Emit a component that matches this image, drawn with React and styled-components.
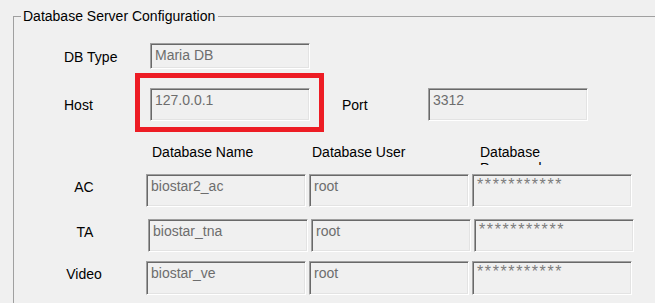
import React from 'react';
import styled, { createGlobalStyle } from 'styled-components';

const GlobalStyle = createGlobalStyle`
    html, body {
        margin: 0;
        padding: 0;
        background: #f0f0f0;
        overflow: hidden;
    }
`;

const Page = styled.div`
    width: 720px;
    padding: 8px 0 0 13px;
    font-family: "Liberation Sans", Arial, sans-serif;
    font-size: 14px;
    line-height: 16px;
    color: #000;
`;

const GroupBox = styled.fieldset`
    margin: 0;
    padding: 0 0 40px 0;
    width: 700px;
    border: 1px solid #a0a0a0;
`;

const Legend = styled.legend`
    margin-left: 7px;
    padding: 0 3px 0 2px;
    font-size: 14px;
    line-height: 16px;
`;

const Body = styled.div`
    padding-top: 19px;
`;

const TopGrid = styled.div`
    display: grid;
    grid-template-columns: 86px 160px 32px 86px 160px;
    grid-template-rows: 26px 33px;
    row-gap: 19px;
    margin-left: 50px;
`;

const Label = styled.div`
    align-self: center;
    padding-top: 1px;
    grid-column: ${(p) => p.$col || 'auto'};
`;

const Field = styled.div`
    box-sizing: border-box;
    height: 100%;
    padding: 3px 4px;
    border: 1px solid;
    border-color: #a0a0a0 #ffffff #ffffff #a0a0a0;
    box-shadow: inset 1px 1px #696969, inset -1px -1px #e3e3e3;
    color: #6d6d6d;
    white-space: nowrap;
    overflow: hidden;
`;

const SecretField = styled(Field)`
    padding-top: 2px;
    font-size: 16px;
    letter-spacing: 1.6px;
    color: #7c7c7c;
`;

const Marked = styled.div`
    position: relative;
`;

const Highlight = styled.div`
    position: absolute;
    top: -15px;
    left: -15px;
    right: -14px;
    bottom: -11px;
    border: 5px solid #ed1c24;
    pointer-events: none;
`;

const TableRow = styled.div`
    display: grid;
    grid-template-columns: ${(p) => 93 + (p.$shift || 0)}px repeat(3, 160px);
    column-gap: 3px;
    height: ${(p) => p.$height || 33}px;
    margin-top: ${(p) => p.$gap}px;
    margin-left: 36px;
`;

const Header = styled.div`
    height: 21px;
    overflow: hidden;
    padding-left: ${(p) => p.$indent}px;
    width: ${(p) => p.$wrap || 'auto'};
`;

const RowLabel = styled.div`
    padding: 5px 25px 0 0;
    text-align: center;
`;

const rows = [
    { label: 'AC', name: 'biostar2_ac', user: 'root', gap: 9, height: 33 },
    { label: 'TA', name: 'biostar_tna', user: 'root', gap: 12, height: 33, shift: 2 },
    { label: 'Video', name: 'biostar_ve', user: 'root', gap: 9, height: 34, shift: 0 },
];

export default function App() {
    return (
        <Page>
            <GlobalStyle />
            <GroupBox>
                <Legend>Database Server Configuration</Legend>
                <Body>
                    <TopGrid>
                        <Label>DB Type</Label>
                        <Field>Maria DB</Field>
                        <Label $col="1">Host</Label>
                        <Marked>
                            <Field>127.0.0.1</Field>
                            <Highlight />
                        </Marked>
                        <Label $col="4">Port</Label>
                        <Field>3312</Field>
                    </TopGrid>

                    <TableRow $gap={23} $height={21}>
                        <div />
                        <Header $indent={6}>Database Name</Header>
                        <Header $indent={3}>Database User</Header>
                        <Header $indent={8} $wrap="100px">Database Password</Header>
                    </TableRow>

                    {rows.map((row) => (
                        <TableRow
                            key={row.label}
                            $gap={row.gap}
                            $height={row.height}
                            $shift={row.shift}
                        >
                            <RowLabel>{row.label}</RowLabel>
                            <Field>{row.name}</Field>
                            <Field>{row.user}</Field>
                            <SecretField>***********</SecretField>
                        </TableRow>
                    ))}
                </Body>
            </GroupBox>
        </Page>
    );
}
